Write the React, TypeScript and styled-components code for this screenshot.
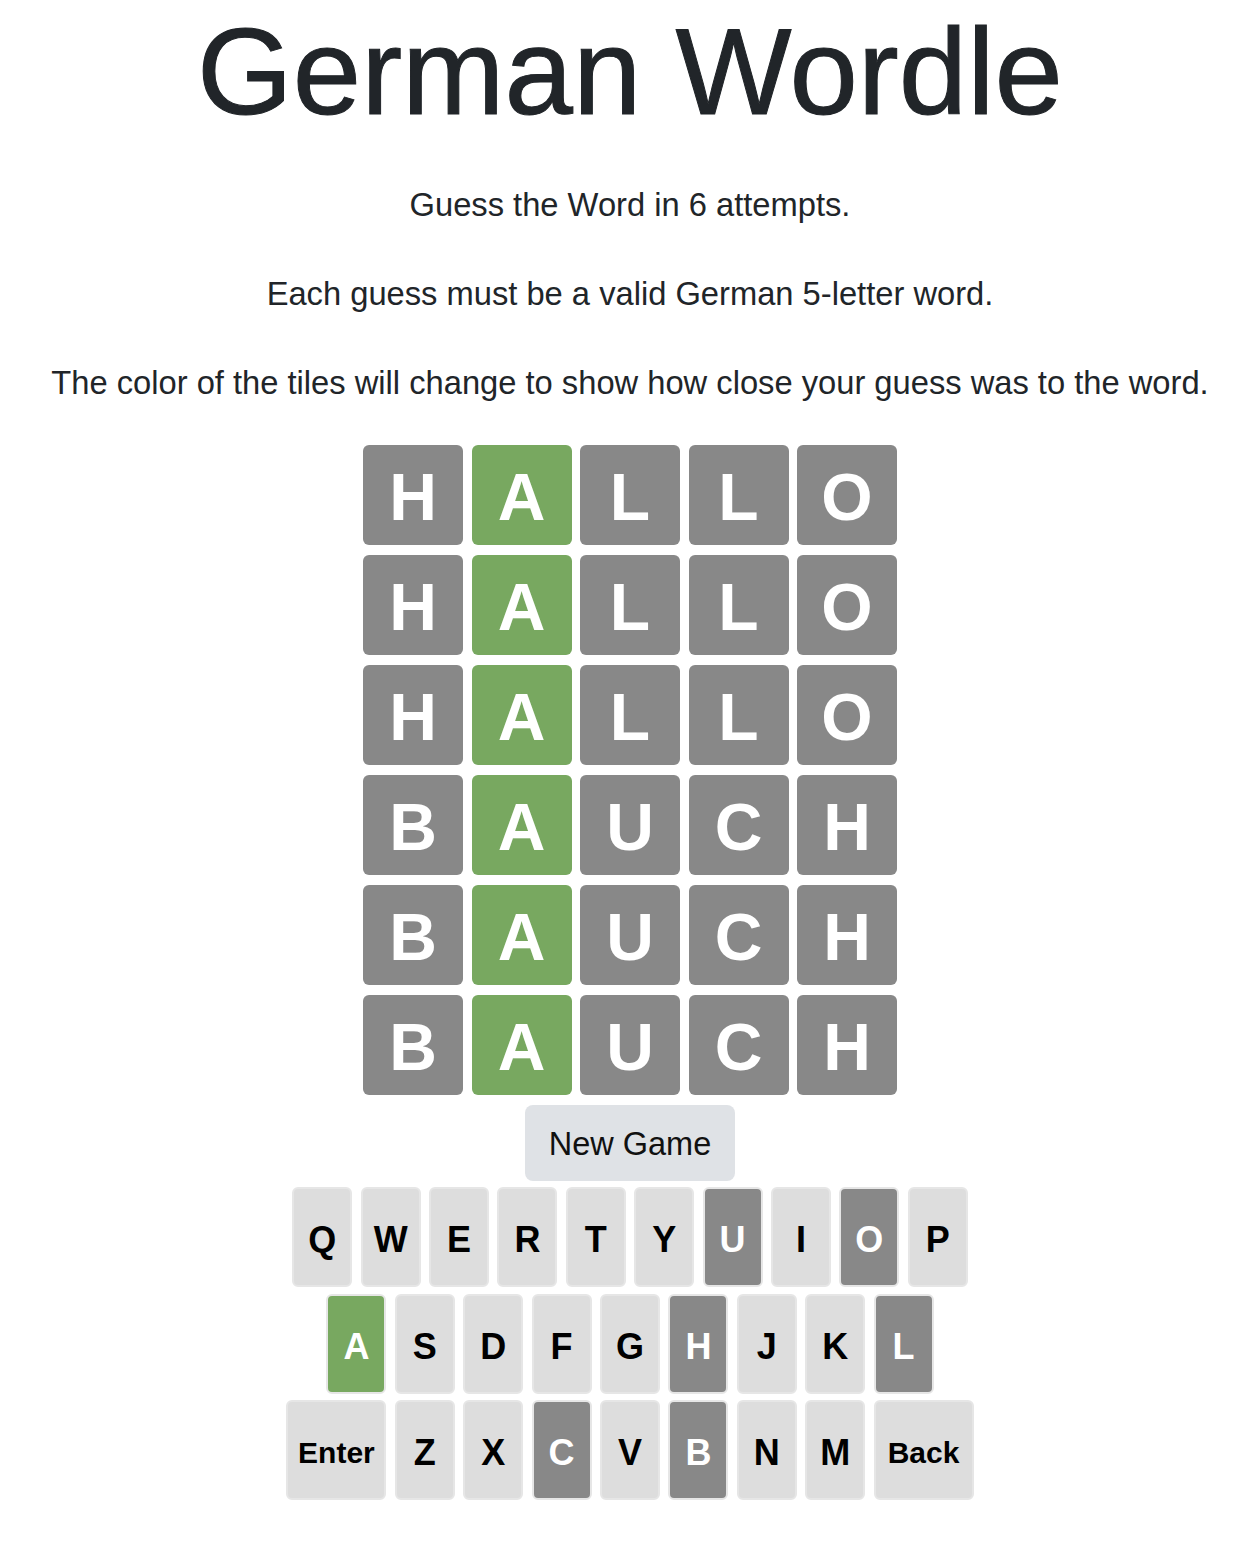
import React from "react";
import { createGlobalStyle, styled } from "styled-components";

const GlobalStyle = createGlobalStyle`
  html, body {
    margin: 0;
    padding: 0;
    background: #fff;
  }
  body {
    font-family: "Liberation Sans", Arial, sans-serif;
    color: #212529;
  }
`;

type TileState = "absent" | "correct" | "present" | "idle";

const COLORS: Record<TileState, string> = {
  absent: "#888888",
  correct: "#78a860",
  present: "#c9b458",
  idle: "#dddddd",
};

const Page = styled.main`
  box-sizing: border-box;
  width: 100%;
  padding-left: 18px;
  display: flex;
  flex-direction: column;
  align-items: center;
`;

const Title = styled.h1`
  margin: 0;
  font-size: 123px;
  font-weight: 400;
  line-height: 143px;
  color: #212529;
  -webkit-text-stroke: 1px #212529;
`;

const Intro = styled.div`
  margin-top: 38px;
  display: flex;
  flex-direction: column;
  align-items: center;
  gap: 41px;
`;

const Line = styled.p`
  margin: 0;
  font-size: 32.7px;
  line-height: 48px;
  text-align: center;
`;

const Board = styled.div`
  margin-top: 38px;
  display: grid;
  grid-template-columns: repeat(5, 100px);
  grid-auto-rows: 100px;
  column-gap: 8.5px;
  row-gap: 10px;
`;

const Tile = styled.div<{ $state: TileState }>`
  display: flex;
  align-items: center;
  justify-content: center;
  padding-top: 3px;
  box-sizing: border-box;
  border-radius: 6px;
  background: ${(p) => COLORS[p.$state]};
  color: #fff;
  font-size: 66px;
  font-weight: 700;
`;

const NewGame = styled.button`
  margin-top: 10px;
  width: 210px;
  height: 76px;
  padding: 2px 0 0;
  border: none;
  border-radius: 8px;
  background: #dfe2e6;
  color: #111;
  font-family: "Liberation Sans", Arial, sans-serif;
  font-size: 32.5px;
  cursor: pointer;
`;

const Keyboard = styled.div`
  margin-top: 6px;
  display: flex;
  flex-direction: column;
  align-items: center;
  gap: 6.5px;
`;

const KeyRow = styled.div`
  display: flex;
  gap: 8.4px;
`;

const Key = styled.button<{ $state: TileState; $wide?: boolean }>`
  box-sizing: border-box;
  width: ${(p) => (p.$wide ? "100px" : "60px")};
  height: 100px;
  padding: 6px 0 0;
  border: 2px solid #e6e6e6;
  border-radius: 6px;
  background: ${(p) => COLORS[p.$state]};
  color: ${(p) => (p.$state === "idle" ? "#000" : "#fff")};
  font-family: "Liberation Sans", Arial, sans-serif;
  font-size: ${(p) => (p.$wide ? "30px" : "36px")};
  font-weight: 700;
  cursor: pointer;
`;

const guesses: { word: string; states: TileState[] }[] = [
  { word: "HALLO", states: ["absent", "correct", "absent", "absent", "absent"] },
  { word: "HALLO", states: ["absent", "correct", "absent", "absent", "absent"] },
  { word: "HALLO", states: ["absent", "correct", "absent", "absent", "absent"] },
  { word: "BAUCH", states: ["absent", "correct", "absent", "absent", "absent"] },
  { word: "BAUCH", states: ["absent", "correct", "absent", "absent", "absent"] },
  { word: "BAUCH", states: ["absent", "correct", "absent", "absent", "absent"] },
];

const rows = [
  ["Q", "W", "E", "R", "T", "Y", "U", "I", "O", "P"],
  ["A", "S", "D", "F", "G", "H", "J", "K", "L"],
  ["Enter", "Z", "X", "C", "V", "B", "N", "M", "Back"],
];

const used: Record<string, TileState> = {
  A: "correct",
  U: "absent",
  O: "absent",
  H: "absent",
  L: "absent",
  C: "absent",
  B: "absent",
};

export default function App() {
  return (
    <>
      <GlobalStyle />
      <Page>
        <Title>German Wordle</Title>
        <Intro>
          <Line>Guess the Word in 6 attempts.</Line>
          <Line>Each guess must be a valid German 5-letter word.</Line>
          <Line>The color of the tiles will change to show how close your guess was to the word.</Line>
        </Intro>
        <Board>
          {guesses.map((g, r) =>
            g.word.split("").map((ch, i) => (
              <Tile key={`${r}-${i}`} $state={g.states[i]}>
                {ch}
              </Tile>
            ))
          )}
        </Board>
        <NewGame>New Game</NewGame>
        <Keyboard>
          {rows.map((row, r) => (
            <KeyRow key={r}>
              {row.map((k) => (
                <Key key={k} $state={used[k] ?? "idle"} $wide={k.length > 1}>
                  {k}
                </Key>
              ))}
            </KeyRow>
          ))}
        </Keyboard>
      </Page>
    </>
  );
}
